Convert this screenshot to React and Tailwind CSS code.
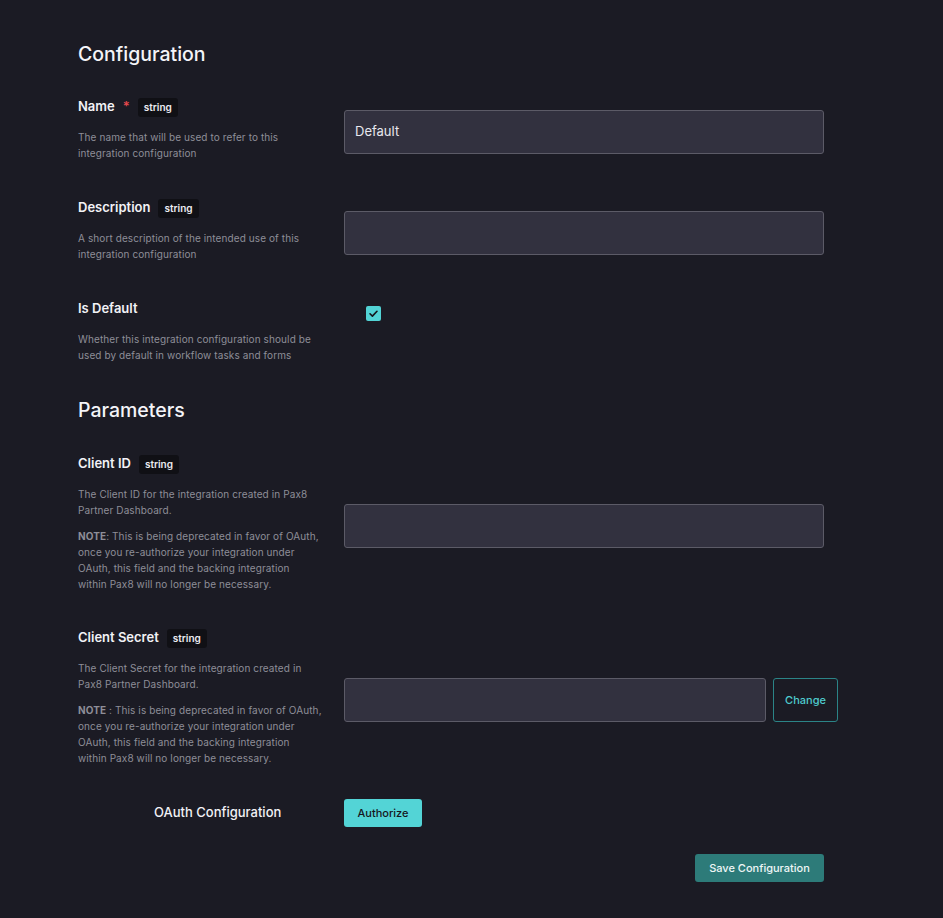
import React from "react";

const font = { fontFamily: "Inter, 'Liberation Sans', sans-serif" };

function Badge() {
  return (
    <span className="ml-[8px] inline-flex h-[19px] items-center rounded-[3px] bg-[#101015] px-[6px] text-[10px] font-semibold text-[#ececf1]">
      string
    </span>
  );
}

function Label({ children, required }) {
  return (
    <div className="flex h-[20px] items-center">
      <span className="text-[13px] font-semibold text-[#f2f2f6]">{children}</span>
      {required && <span className="ml-[8px] text-[13px] font-semibold text-[#e5484d]">*</span>}
      <Badge />
    </div>
  );
}

function Desc({ lines, className = "" }) {
  return (
    <p className={"text-[10px] leading-[16px] tracking-[0.1px] text-[#8e8e98] " + className}>
      {lines.map((l, i) => (
        <span key={i} className="block whitespace-nowrap">
          {l}
        </span>
      ))}
    </p>
  );
}

function Input({ value, className = "w-[480px]" }) {
  return (
    <div className={"flex h-[44px] items-center rounded-[3px] border border-[#5c5b67] bg-[#32313f] px-[10px] text-[13px] text-[#e8e8ee] " + className}>
      {value}
    </div>
  );
}

function Row({ left, right, align = "items-center" }) {
  return (
    <div className={"flex " + align}>
      <div className="w-[266px] shrink-0 pb-[6px] pr-[25px]">{left}</div>
      <div>{right}</div>
    </div>
  );
}

export default function App() {
  return (
    <div className="min-h-screen bg-[#1b1b24] pl-[78px] pt-[40px]" style={font}>
      <h1 className="text-[19.5px] font-medium leading-[28px] text-[#f4f4f8]">Configuration</h1>

      <div className="mt-[29px] flex flex-col gap-[31px]">
        <Row
          left={
            <>
              <Label required>Name</Label>
              <Desc className="mt-[12px]" lines={["The name that will be used to refer to this", "integration configuration"]} />
            </>
          }
          right={<Input value="Default" />}
        />
        <Row
          left={
            <>
              <Label>Description</Label>
              <Desc className="mt-[12px]" lines={["A short description of the intended use of this", "integration configuration"]} />
            </>
          }
          right={<Input value="" />}
        />
        <Row
          align="items-start"
          left={
            <>
              <div className="flex h-[20px] items-center">
                <span className="text-[13px] font-semibold text-[#f2f2f6]">Is Default</span>
              </div>
              <Desc className="mt-[12px]" lines={["Whether this integration configuration should be", "used by default in workflow tasks and forms"]} />
            </>
          }
          right={
            <div className="ml-[22px] mt-[7px] flex h-[15px] w-[15px] items-center justify-center rounded-[2px] bg-[#52d3d5]">
              <svg width="11" height="11" viewBox="0 0 12 12" fill="none">
                <path d="M2.2 6.3 L4.8 8.8 L9.8 3.6" stroke="#15151c" strokeWidth="1.8" strokeLinecap="round" strokeLinejoin="round" />
              </svg>
            </div>
          }
        />
      </div>

      <h2 className="mt-[27px] text-[19.5px] font-medium leading-[28px] text-[#f4f4f8]">Parameters</h2>

      <div className="mt-[30px] flex flex-col gap-[30px]">
        <Row
          left={
            <>
              <Label>Client ID</Label>
              <Desc className="mt-[12px]" lines={["The Client ID for the integration created in Pax8", "Partner Dashboard."]} />
              <Desc
                className="mt-[10px]"
                lines={[
                  <>
                    <span className="font-bold">NOTE</span>: This is being deprecated in favor of OAuth,
                  </>,
                  "once you re-authorize your integration under",
                  "OAuth, this field and the backing integration",
                  "within Pax8 will no longer be necessary.",
                ]}
              />
            </>
          }
          right={<Input value="" />}
        />
        <Row
          left={
            <>
              <Label>Client Secret</Label>
              <Desc className="mt-[12px]" lines={["The Client Secret for the integration created in", "Pax8 Partner Dashboard."]} />
              <Desc
                className="mt-[10px]"
                lines={[
                  <>
                    <span className="font-bold">NOTE</span> : This is being deprecated in favor of OAuth,
                  </>,
                  "once you re-authorize your integration under",
                  "OAuth, this field and the backing integration",
                  "within Pax8 will no longer be necessary.",
                ]}
              />
            </>
          }
          right={
            <div className="flex gap-[7px]">
              <Input value="" className="w-[422px]" />
              <button className="flex h-[44px] w-[65px] items-center justify-center rounded-[3px] border border-[#2b8487] text-[11px] font-medium text-[#4fcbce]">
                Change
              </button>
            </div>
          }
        />
      </div>

      <div className="mt-[27px] flex items-center">
        <div className="w-[266px] shrink-0 pl-[76px] text-[13px] font-medium text-[#f2f2f6]">OAuth Configuration</div>
        <button className="flex h-[28px] w-[78px] items-center justify-center rounded-[3px] bg-[#53d4d6] text-[11px] font-medium text-[#16161d]">
          Authorize
        </button>
      </div>

      <div className="mt-[27px] flex w-[746px] justify-end pb-[36px]">
        <button className="flex h-[28px] w-[129px] items-center justify-center rounded-[3px] bg-[#2d7b79] text-[11px] font-medium text-[#eef6f6]">
          Save Configuration
        </button>
      </div>
    </div>
  );
}
